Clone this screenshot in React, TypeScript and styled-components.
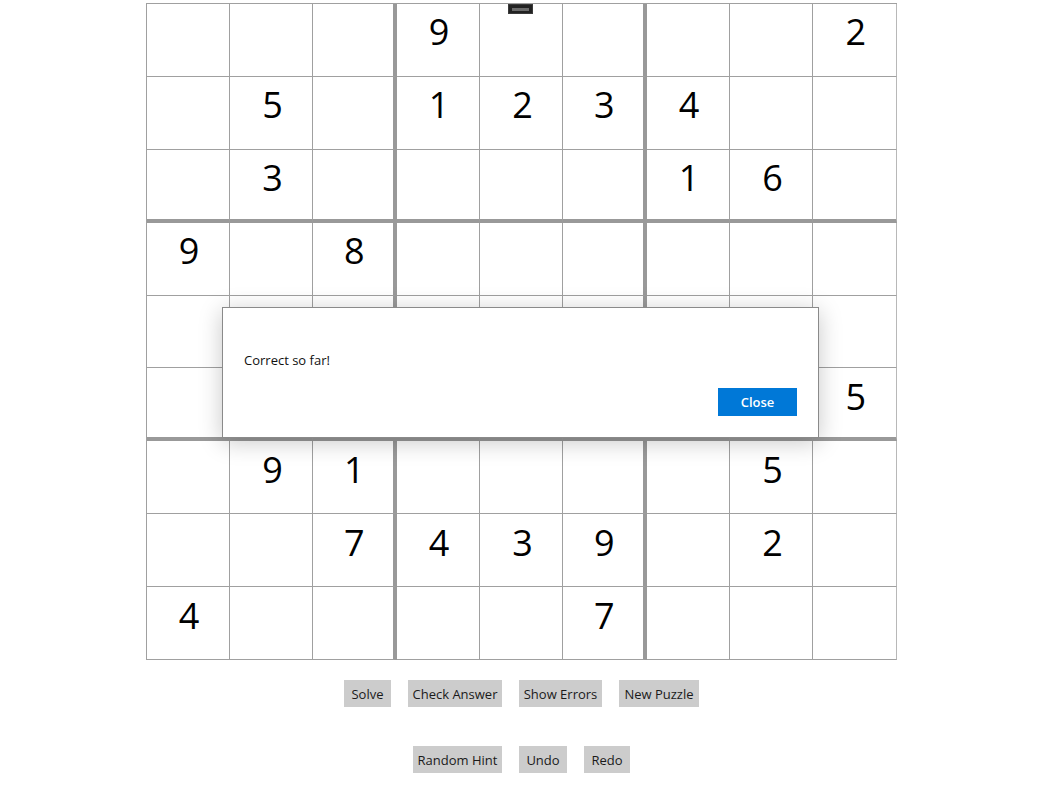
import React from "react";
import styled, { createGlobalStyle } from "styled-components";

const GlobalStyle = createGlobalStyle`
  html, body { margin: 0; padding: 0; background: #fff; }
  body { font-family: "Open Sans", "Noto Sans", Arial, sans-serif; }
`;

const Page = styled.div`
  position: relative;
  width: 1044px;
  height: 787px;
  display: flex;
  flex-direction: column;
  align-items: center;
  padding-top: 3px;
  box-sizing: border-box;
`;

const Board = styled.div`
  margin-left: -2px;
  width: 751px;
  height: 657px;
  display: grid;
  grid-template-columns: repeat(9, 1fr);
  grid-template-rows: repeat(9, 1fr);
  border-left: 1px solid #a0a0a0;
  border-top: 1px solid #a0a0a0;
  box-sizing: border-box;
`;

const Cell = styled.div<{ $thickR: boolean; $thickB: boolean; $lastCol: boolean }>`
  box-sizing: border-box;
  border-right: ${(p) => (p.$thickR ? "4px solid #999" : p.$lastCol ? "1px solid #b8b8b8" : "1px solid #a0a0a0")};
  border-bottom: ${(p) => (p.$thickB ? "4px solid #999" : "1px solid #a0a0a0")};
  display: flex;
  align-items: center;
  justify-content: center;
  padding-bottom: ${(p) => (p.$thickB ? 12 : 15)}px;
  padding-left: 3px;
  font-family: "Open Sans", "Noto Sans", sans-serif;
  font-size: 36px;
  line-height: 36px;
  color: #000;
`;

const Toolbar = styled.div`
  display: flex;
  justify-content: center;
  gap: 17px;
  margin-left: -1px;
`;

const FirstRow = styled(Toolbar)`
  margin-top: 20px;
`;

const SecondRow = styled(Toolbar)`
  margin-top: 39px;
`;

const Btn = styled.button<{ $w: number }>`
  width: ${(p) => p.$w}px;
  height: 27px;
  border: none;
  background: #cccccc;
  color: #1a1a1a;
  font-family: "Open Sans", "Noto Sans", sans-serif;
  font-size: 13px;
  padding: 0;
  cursor: pointer;
`;

const DebugBar = styled.div`
  position: absolute;
  left: 508px;
  top: 4px;
  width: 25px;
  height: 10px;
  background: #222;
  border: 1px solid #3a3a3a;
  box-sizing: border-box;
  display: flex;
  align-items: center;
  justify-content: center;
`;

const DebugLine = styled.div`
  width: 17px;
  height: 3px;
  background: #6a6a6a;
`;

const Dialog = styled.div`
  position: absolute;
  left: 222px;
  top: 307px;
  width: 597px;
  height: 131px;
  box-sizing: border-box;
  background: #fff;
  border: 1px solid #8a8a8a;
  box-shadow: 0 4px 22px rgba(0, 0, 0, 0.22);
  display: flex;
  flex-direction: column;
  justify-content: space-between;
  padding: 43px 21px 21px 21px;
`;

const Message = styled.div`
  font-family: "Open Sans", "Noto Sans", sans-serif;
  font-size: 13px;
  color: #111;
`;

const DialogActions = styled.div`
  display: flex;
  justify-content: flex-end;
`;

const PrimaryBtn = styled.button`
  width: 79px;
  height: 28px;
  border: none;
  background: #0078d7;
  color: #fff;
  font-family: "Open Sans", "Noto Sans", sans-serif;
  font-weight: 600;
  font-size: 13px;
  padding: 0;
`;

const puzzle: string[] = [
  "___9____2",
  "_5_1234__",
  "_3____16_",
  "9_8______",
  "_________",
  "________5",
  "_91____5_",
  "__7439_2_",
  "4____7___",
];

export default function App() {
  return (
    <>
      <GlobalStyle />
      <Page>
        <Board>
          {puzzle.map((row, r) =>
            row.split("").map((ch, c) => (
              <Cell
                key={`${r}-${c}`}
                $thickR={c === 2 || c === 5}
                $thickB={r === 2 || r === 5}
                $lastCol={c === 8}
              >
                {ch === "_" ? "" : ch}
              </Cell>
            ))
          )}
        </Board>
        <FirstRow>
          <Btn $w={47}>Solve</Btn>
          <Btn $w={94}>Check Answer</Btn>
          <Btn $w={83}>Show Errors</Btn>
          <Btn $w={80}>New Puzzle</Btn>
        </FirstRow>
        <SecondRow>
          <Btn $w={89}>Random Hint</Btn>
          <Btn $w={48}>Undo</Btn>
          <Btn $w={46}>Redo</Btn>
        </SecondRow>
        <DebugBar>
          <DebugLine />
        </DebugBar>
        <Dialog>
          <Message>Correct so far!</Message>
          <DialogActions>
            <PrimaryBtn>Close</PrimaryBtn>
          </DialogActions>
        </Dialog>
      </Page>
    </>
  );
}
